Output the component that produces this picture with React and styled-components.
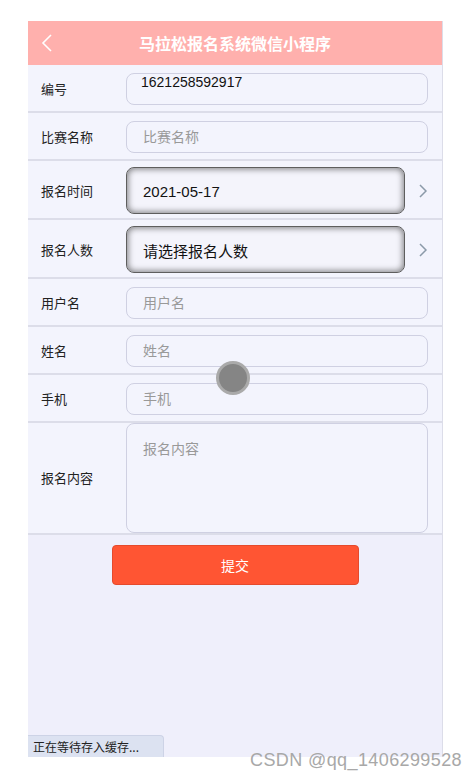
import React from 'react';
import styled, { createGlobalStyle } from 'styled-components';

const fields = [
  { label: '编号', value: '1621258592917', kind: 'value' },
  { label: '比赛名称', placeholder: '比赛名称' },
  { label: '报名时间', value: '2021-05-17', kind: 'picker' },
  { label: '报名人数', value: '请选择报名人数', kind: 'picker' },
  { label: '用户名', placeholder: '用户名' },
  { label: '姓名', placeholder: '姓名' },
  { label: '手机', placeholder: '手机' },
];

const App = () => (
  <React.Fragment>
    <GlobalStyle />
    <Page>
      <Phone>
        <Header>
          <BackIcon width="12" height="20" viewBox="0 0 12 20">
            <path d="M10 2 L2 10 L10 18" fill="none" stroke="#fff" strokeWidth="1.6" />
          </BackIcon>
          <Title>马拉松报名系统微信小程序</Title>
        </Header>
        <Form>
          {fields.map((field, index) =>
            <Row key={index} $kind={field.kind}>
              <Label>{field.label}</Label>
              {field.kind === 'picker' ? (
                <React.Fragment>
                  <Picker>{field.value}</Picker>
                  <Chevron width="10" height="16" viewBox="0 0 10 16">
                    <path d="M2 2 L8 8 L2 14" fill="none" stroke="#8b9aa9" strokeWidth="1.5" />
                  </Chevron>
                </React.Fragment>
              ) : field.kind === 'value' ? (
                <ValueBox>{field.value}</ValueBox>
              ) : (
                <InputBox placeholder={field.placeholder} />
              )}
            </Row>
          )}
          <Row $kind="area">
            <Label>报名内容</Label>
            <TextArea placeholder="报名内容" />
          </Row>
        </Form>
        <ButtonWrap>
          <SubmitButton>提交</SubmitButton>
        </ButtonWrap>
        <Status>正在等待存入缓存...</Status>
        <Touch />
      </Phone>
      <Watermark>CSDN @qq_1406299528</Watermark>
    </Page>
  </React.Fragment>
);

export default App;

const GlobalStyle = createGlobalStyle`
  body {
    margin: 0;
    background: #fff;
    font-family: "Liberation Sans", "Noto Sans CJK SC", sans-serif;
  }
`;

const Page = styled.div`
  position: relative;
  width: 476px;
  height: 779px;
  padding: 21px 0 0 28px;
  box-sizing: border-box;
`;

const Phone = styled.div`
  position: relative;
  width: 414px;
  height: 736px;
  background: #efeffb;
  border-right: 1px solid #dcdde9;
  display: flex;
  flex-direction: column;
`;

const Header = styled.div`
  height: 44px;
  flex-shrink: 0;
  background: #ffb0ad;
  display: flex;
  align-items: center;
  justify-content: center;
  position: relative;
`;

const BackIcon = styled.svg`
  position: absolute;
  left: 13px;
  top: 12px;
`;

const Title = styled.div`
  color: #fff;
  font-size: 16px;
  font-weight: bold;
  font-family: "Noto Sans CJK SC", sans-serif;
`;

const Form = styled.div`
  background: #f3f4fd;
  display: flex;
  flex-direction: column;
`;

const rowPadding = {
  area: '0 14px 0 13px',
  picker: '6px 14px 4px 13px',
  value: '8px 14px 6px 13px',
};

const Row = styled.div`
  display: flex;
  align-items: center;
  padding: ${p => rowPadding[p.$kind] || rowPadding.value};
  border-bottom: 2px solid #dcdde9;
`;

const Label = styled.div`
  width: 85px;
  flex-shrink: 0;
  font-size: 13px;
  line-height: 16px;
  color: #222;
  font-family: "Noto Sans CJK SC", sans-serif;
`;

const InputBox = styled.input`
  flex: 1;
  height: 32px;
  box-sizing: border-box;
  border: 1px solid #cfd0e2;
  border-radius: 8px;
  background: #f3f4fd;
  padding: 0 16px;
  font-size: 14px;
  font-family: "Liberation Sans", "Noto Sans CJK SC", sans-serif;
  outline: none;
  &::placeholder {
    color: #999;
  }
`;

const ValueBox = styled.div`
  flex: 1;
  height: 32px;
  box-sizing: border-box;
  border: 1px solid #cfd0e2;
  border-radius: 8px;
  padding: 0 14px;
  font-size: 14px;
  line-height: 16px;
  color: #111;
`;

const Picker = styled.div`
  width: 280px;
  height: 47px;
  box-sizing: border-box;
  border: 1px solid #5e5e5e;
  border-radius: 8px;
  background: #f4f4fb;
  box-shadow: inset 0 0 6px 1px rgba(0, 0, 0, 0.5);
  display: flex;
  align-items: center;
  padding: 1px 16px 0;
  font-size: 15px;
  color: #111;
  font-family: "Liberation Sans", "Noto Sans CJK SC", sans-serif;
`;

const Chevron = styled.svg`
  margin-left: 13px;
`;

const TextArea = styled.textarea`
  flex: 1;
  height: 110px;
  box-sizing: border-box;
  border: 1px solid #cfd0e2;
  border-radius: 8px;
  background: #f3f4fd;
  padding: 14px 16px;
  font-size: 14px;
  font-family: "Noto Sans CJK SC", sans-serif;
  resize: none;
  outline: none;
  display: block;
  &::placeholder {
    color: #999;
  }
`;

const ButtonWrap = styled.div`
  display: flex;
  justify-content: center;
  padding-top: 10px;
`;

const SubmitButton = styled.button`
  width: 247px;
  height: 40px;
  border: 1px solid #e54a2c;
  border-radius: 4px;
  background: #ff5533;
  color: #fff;
  font-size: 14px;
  font-family: "Noto Sans CJK SC", sans-serif;
`;

const Status = styled.div`
  position: absolute;
  left: 0;
  bottom: 0;
  width: 136px;
  height: 22px;
  background: #dce2f1;
  border-top-right-radius: 4px;
  border: 1px solid #cdd3e6;
  border-left: none;
  border-bottom: none;
  box-sizing: border-box;
  padding-left: 5px;
  font-size: 12px;
  line-height: 22px;
  color: #222;
  font-family: "Noto Sans CJK SC", sans-serif;
`;

const Touch = styled.div`
  position: absolute;
  left: 188px;
  top: 340px;
  width: 28px;
  height: 28px;
  border-radius: 50%;
  background: #858585;
  border: 3px solid #aaaaaa;
`;

const Watermark = styled.div`
  position: absolute;
  left: 250px;
  top: 750px;
  font-size: 18px;
  color: #a8a8a8;
  font-family: "Liberation Sans", sans-serif;
  letter-spacing: 0.4px;
`;
